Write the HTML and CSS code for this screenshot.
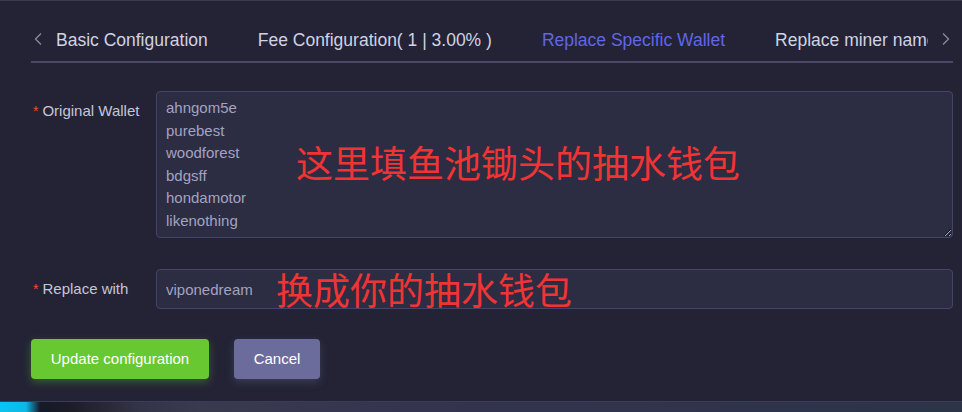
FILE: index.html
```html
<!DOCTYPE html>
<html>
<head>
<meta charset="utf-8">
<link rel="stylesheet" href="styles.css">
</head>
<body>
<div class="page">
  <div class="tabs">
    <span class="arrow arrow-left"><svg width="8" height="12" viewBox="0 0 8 12"><path d="M7 0.5 L1.5 6 L7 11.5" fill="none" stroke="#8a8aa2" stroke-width="1.3"/></svg></span>
    <div class="tab-scroll">
      <div class="tab-list">
        <span class="tab">Basic Configuration</span>
        <span class="tab">Fee Configuration( 1 | 3.00% )</span>
        <span class="tab active">Replace Specific Wallet</span>
        <span class="tab">Replace miner name</span>
      </div>
    </div>
    <span class="arrow arrow-right"><svg width="8" height="12" viewBox="0 0 8 12"><path d="M1 0.5 L6.5 6 L1 11.5" fill="none" stroke="#8a8aa2" stroke-width="1.3"/></svg></span>
  </div>

  <form class="form">
    <div class="row">
      <label class="label"><span class="req">*</span>Original Wallet</label>
      <textarea class="area" readonly>ahngom5e
purebest
woodforest
bdgsff
hondamotor
likenothing</textarea>
    </div>
    <div class="row">
      <label class="label"><span class="req">*</span>Replace with</label>
      <input class="field" type="text" value="viponedream" readonly>
    </div>
    <div class="actions">
      <button type="button" class="btn btn-ok">Update configuration</button>
      <button type="button" class="btn btn-cancel">Cancel</button>
    </div>
  </form>
  <div class="note note-1">这里填鱼池锄头的抽水钱包</div>
  <div class="note note-2">换成你的抽水钱包</div>
</div>
<div class="footer-strip"></div>
</body>
</html>
```
FILE: styles.css
```css
html, body {
  margin: 0;
  padding: 0;
  background: #232335;
  font-family: "Liberation Sans", Arial, sans-serif;
  overflow: hidden;
}
.page {
  position: relative;
  height: 402px;
  border-top: 1px solid #3a3a52;
  border-bottom: 1px solid #3c3c58;
  box-sizing: border-box;
}
.tabs {
  display: flex;
  align-items: stretch;
  margin: 20px 9px 0 31px;
  height: 42px;
  border-bottom: 2px solid #4a4a68;
  box-sizing: border-box;
}
.arrow {
  width: 25px;
  display: flex;
  align-items: center;
  padding-bottom: 4px;
  box-sizing: border-box;
}
.arrow-left { padding-left: 3px; }
.arrow-right { justify-content: flex-end; padding-right: 3px; }
.tab-scroll {
  flex: 1;
  overflow: hidden;
}
.tab-list {
  display: flex;
  gap: 50px;
  white-space: nowrap;
  height: 100%;
}
.tab {
  font-size: 17.5px;
  color: #d2d2e2;
  line-height: 38px;
  position: relative;
}
.tab.active {
  color: #6166e6;
}
.tab.active::after {
  content: "";
  position: absolute;
  left: -1px;
  right: 0;
  bottom: -4px;
  height: 2px;
  background: #6166e6;
}
.form {
  margin: 28px 9px 0 31px;
}
.row {
  display: flex;
  align-items: flex-start;
  margin-bottom: 31px;
}
.label {
  width: 125px;
  flex: none;
  font-size: 15px;
  color: #c6c6d8;
  line-height: 40px;
}
.req {
  color: #f04a2a;
  margin-right: 4px;
  margin-left: 2px;
  font-size: 14px;
}
.area, .field {
  flex: 1;
  background: #2c2c42;
  border: 1px solid #44446a;
  border-radius: 4px;
  color: #a3a3c3;
  font-family: "Liberation Sans", Arial, sans-serif;
  font-size: 15px;
  box-sizing: border-box;
  outline: none;
  margin: 0;
}
.area {
  height: 147px;
  padding: 5px 9px 3px;
  line-height: 22.5px;
  resize: vertical;
}
.field {
  height: 40px;
  padding: 0 9px;
}
.actions {
  display: flex;
  gap: 25px;
  margin-top: -1px;
}
.btn {
  height: 40px;
  border: none;
  border-radius: 4px;
  color: #ffffff;
  font-family: "Liberation Sans", Arial, sans-serif;
  font-size: 15px;
  padding: 0 0 2px;
}
.btn-ok {
  width: 178px;
  background: #67c832;
  box-shadow: 0 3px 8px rgba(103, 200, 50, 0.35);
}
.btn-cancel {
  width: 86px;
  background: #6c6c9c;
  box-shadow: 0 3px 8px rgba(108, 108, 156, 0.35);
}
.note {
  position: absolute;
  color: #f03434;
  font-family: "Noto Sans CJK SC", sans-serif;
  font-size: 37px;
  line-height: 1;
  white-space: nowrap;
}
.note-1 { left: 296px; top: 143px; }
.note-2 { left: 276px; top: 270px; }
.footer-strip {
  height: 10px;
  background: linear-gradient(90deg, #08c4f2 0px, #0eb8e6 26px, #141a28 40px, #1c1c28 70px, #343448 140px, #3a3a4e 200px, #333450 400px, #2c3448 962px);
}
```
